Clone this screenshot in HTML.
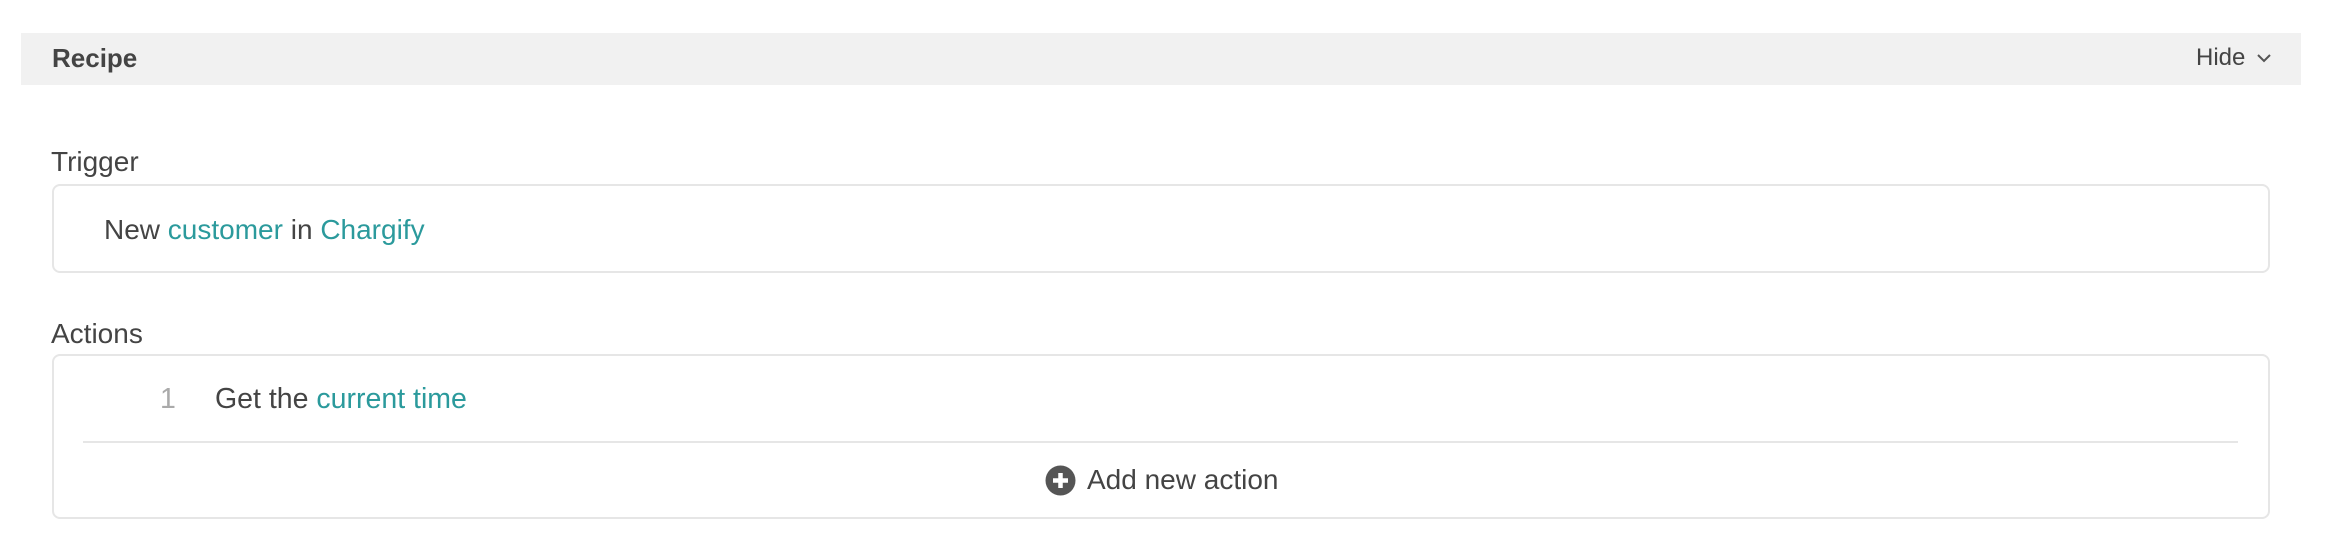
<!DOCTYPE html>
<html><head><style>
body{margin:0;width:2326px;height:546px;background:#fff;font-family:"Liberation Sans",sans-serif;color:#444;position:relative;overflow:hidden}
.a{position:absolute;white-space:nowrap;line-height:34px}
.t{color:#2b9a9c}
.box{position:absolute;border:2px solid #e6e6e6;border-radius:8px;box-sizing:border-box;background:#fff}
</style></head><body>
<div class="a" style="left:21px;top:33px;width:2280px;height:52px;background:#f1f1f1"></div>
<div class="a" style="left:52px;top:41px;font-size:26px;font-weight:bold;color:#444">Recipe</div>
<div class="a" style="left:2196px;top:41px;font-size:24px">Hide</div>
<svg class="a" style="left:2256px;top:52px" width="16" height="12" viewBox="0 0 16 12"><path d="M2 3 L8 9 L14 3" fill="none" stroke="#555" stroke-width="2"/></svg>
<div class="a" style="left:51px;top:145px;font-size:28px">Trigger</div>
<div class="box" style="left:52px;top:184px;width:2218px;height:89px"></div>
<div class="a" style="left:104px;top:213px;font-size:28px">New <span class="t">customer</span> in <span class="t">Chargify</span></div>
<div class="a" style="left:51px;top:317px;font-size:28px">Actions</div>
<div class="box" style="left:52px;top:354px;width:2218px;height:165px"></div>
<div class="a" style="left:160px;top:382px;font-size:28.5px;color:#aaa">1</div>
<div class="a" style="left:215px;top:382px;font-size:28.5px">Get the <span class="t">current time</span></div>
<div class="a" style="left:83px;top:441px;width:2155px;height:2px;background:#e6e6e6"></div>
<svg class="a" style="left:1045px;top:465px" width="31" height="31" viewBox="0 0 31 31"><circle cx="15.5" cy="15.5" r="15" fill="#555"/><path d="M15.5 8v15M8 15.5h15" stroke="#fff" stroke-width="4.5"/></svg>
<div class="a" style="left:1087px;top:463px;font-size:28px">Add new action</div>
</body></html>
